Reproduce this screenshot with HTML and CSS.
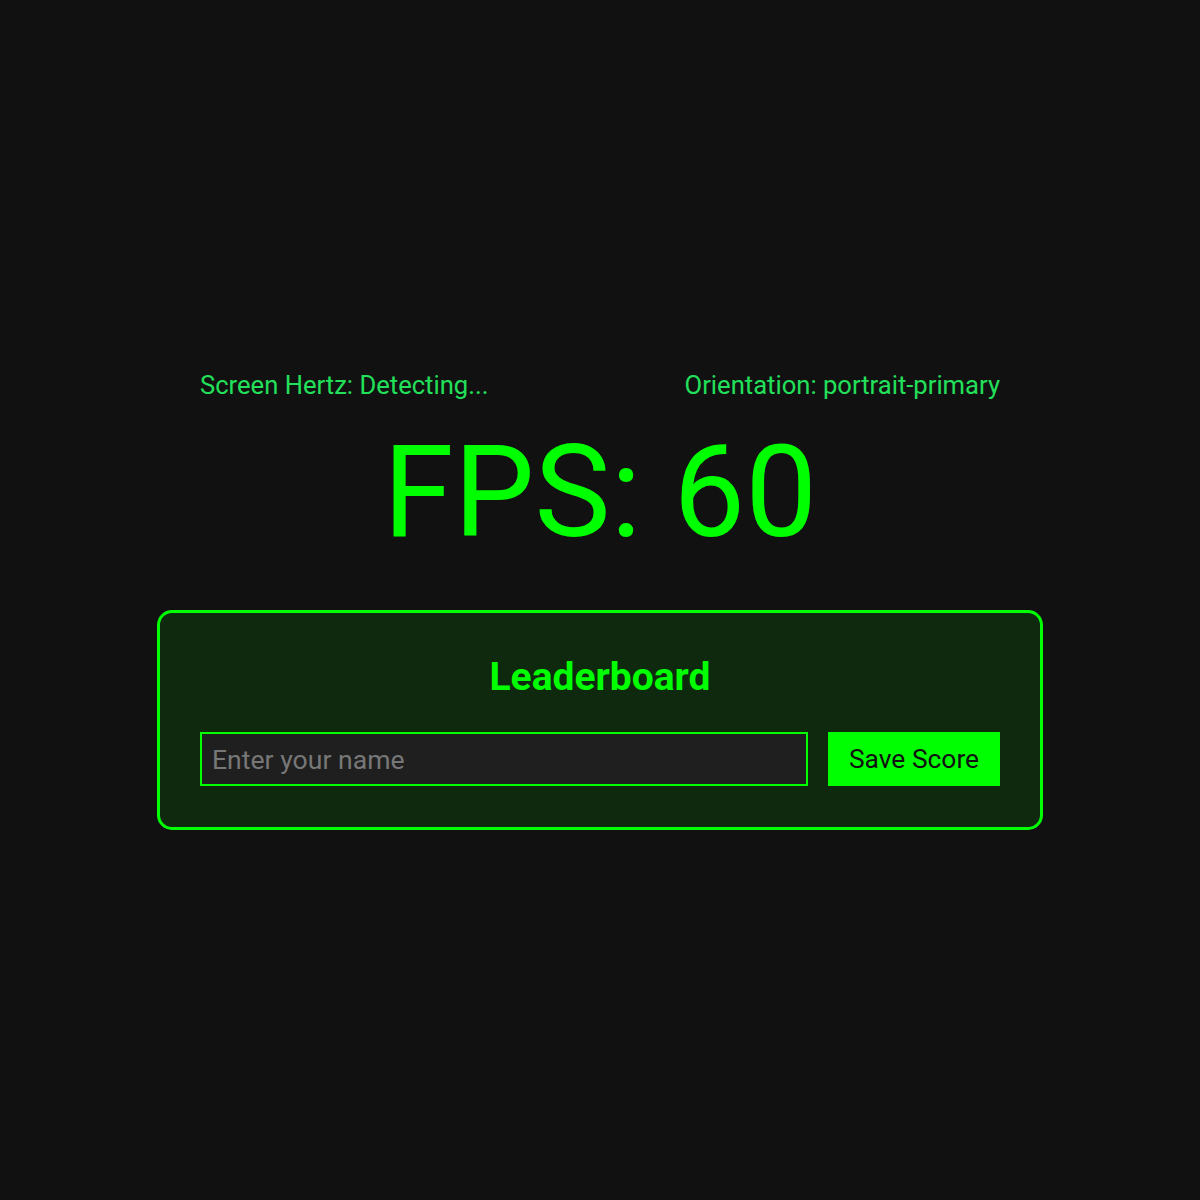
FILE: index.html
```html
<!DOCTYPE html>
<html lang="en">
<head>
<meta charset="utf-8">
<title>FPS Meter</title>
<link rel="stylesheet" href="styles.css">
</head>
<body>
<main class="app">
  <div class="info-row">
    <span class="info">Screen Hertz: Detecting...</span>
    <span class="info">Orientation: portrait-primary</span>
  </div>
  <div class="fps">FPS: 60</div>
  <section class="board">
    <h2 class="board-title">Leaderboard</h2>
    <form class="board-form">
      <input class="name-input" type="text" placeholder="Enter your name">
      <button class="save-btn" type="button">Save Score</button>
    </form>
  </section>
</main>
</body>
</html>
```
FILE: styles.css
```css
html, body {
  margin: 0;
  padding: 0;
}
body {
  background: #111111;
  color: #00ff00;
  font-family: Roboto, "Liberation Sans", sans-serif;
  min-height: 100vh;
  display: flex;
  align-items: center;
  justify-content: center;
}
.app {
  display: flex;
  flex-direction: column;
  align-items: center;
  padding-top: 1px;
}
.info-row {
  width: 800px;
  display: flex;
  justify-content: space-between;
  font-size: 25.6px;
  line-height: 28px;
  color: #22e05a;
}
.fps {
  margin-top: 18px;
  font-size: 128px;
  line-height: 150px;
  color: #00ff00;
}
.board {
  margin-top: 43px;
  width: 800px;
  padding: 42px 40px 41px;
  border: 3px solid #00ff00;
  border-radius: 15px;
  background: #0f290f;
}
.board-title {
  margin: 0;
  text-align: center;
  font-size: 39px;
  line-height: 44px;
  font-weight: 700;
  color: #00ff00;
}
.board-form {
  margin: 33px 0 0;
  display: flex;
  gap: 20px;
}
.name-input {
  flex: 1;
  box-sizing: border-box;
  height: 54px;
  margin: 0;
  padding: 0 10px;
  border: 2px solid #00ff00;
  background: #1f1f1f;
  color: #dddddd;
  font-family: Roboto, "Liberation Sans", sans-serif;
  font-size: 26.6px;
  outline: none;
}
.name-input::placeholder {
  color: #777777;
}
.save-btn {
  box-sizing: border-box;
  width: 172px;
  height: 54px;
  margin: 0;
  padding: 0;
  border: none;
  background: #00ff00;
  color: #111111;
  font-family: Roboto, "Liberation Sans", sans-serif;
  font-size: 26.4px;
  cursor: pointer;
}
```
